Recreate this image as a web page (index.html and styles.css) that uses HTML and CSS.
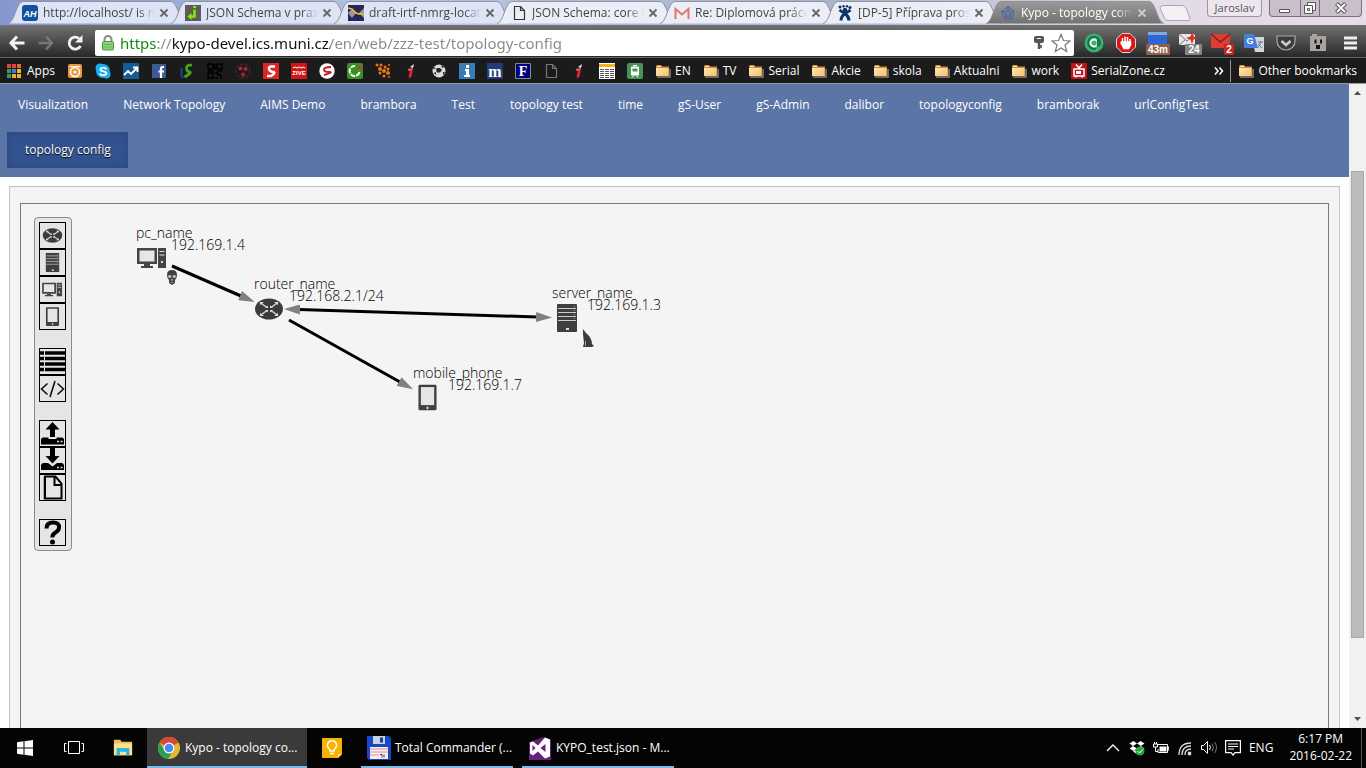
FILE: index.html
```html
<!DOCTYPE html>
<html lang="en">
<head>
<meta charset="utf-8">
<title>Kypo - topology config</title>
<link rel="stylesheet" href="styles.css">
</head>
<body>
<svg class="defs" aria-hidden="true">
  <defs>
    <linearGradient id="folderFill" x1="0" y1="0" x2="1" y2="1"><stop offset="0" stop-color="#ffe7b5"/><stop offset="1" stop-color="#f5bf6a"/></linearGradient>
    <linearGradient id="activeFill" x1="0" y1="0" x2="0" y2="1"><stop offset="0" stop-color="#9a9a9a"/><stop offset="1" stop-color="#727272"/></linearGradient>
    <symbol id="tab" viewBox="0 0 179 26" preserveAspectRatio="none"><path d="M0 24.5C7 23 8 2 15 1.5H163C170 2 171 23 178 24.5" stroke="#8d8f9a"/></symbol>
    <symbol id="close" viewBox="0 0 10 10"><path d="M1.5 1.5l7 7M8.500 1.500l-7 7" stroke="currentColor" stroke-width="1.800"/></symbol>
    <symbol id="folder" viewBox="0 0 16 16"><path d="M1 3.500Q1 2 2 2H6L7.500 3.500H14V13H1Z" fill="#c98a3a"/><path d="M2 14H15V6" stroke="#8a8377" stroke-width="1.500" fill="none"/><path d="M1 5H13.500V13H1Z" fill="url(#folderFill)"/><path d="M2 3.500H6" stroke="#ffe9c0"/></symbol>
    <symbol id="page" viewBox="0 0 16 16"><path d="M3.500 1.500h6l4 4v9h-10zM9.500 1.500v4h4" fill="none" stroke="currentColor" stroke-width="1.200"/></symbol>
    <symbol id="redi" viewBox="0 0 16 16"><path d="M7 6l3-1-1.500 9-3 1z" fill="#d8263c"/><path d="M7 4l4-3-1 4z" fill="#e4e4ee"/><path d="M5 7l4-1" stroke="#ec5262" stroke-width="2"/></symbol>
    <symbol id="router" viewBox="0 0 30 22"><ellipse cx="15" cy="11" rx="14" ry="10.500" fill="#3b3b3b"/><path d="M6 4.500l7 5M24 4.500l-7 5M6 17.500l7-5M24 17.500l-7-5" stroke="#d6d6d6" stroke-width="1.500"/><path d="M6 7V4h4zM20 4h4v3zM6 15v3h4zM20 18h4v-3z" fill="#ddd"/><path d="M11 10h3V7.500zM16 7.500V10h3zM11 12h3v2.500zM16 14.500V12h3z" fill="#ddd"/></symbol>
    <symbol id="server" viewBox="0 0 20 28"><rect width="20" height="28" rx="1" fill="#3e3e3e"/><path d="M1 4.500h18M1 8.500h18M1 12.500h18M1 16.500h18" stroke="#ccc"/><path d="M16.500 2.500h1.500M16.500 6.500h1.500M16.500 10.500h1.500M16.500 14.500h1.500" stroke="#888"/><rect x="9" y="24" width="3" height="2" fill="#ddd"/></symbol>
    <symbol id="pc" viewBox="0 0 29 20"><path d="M0 0H20V16H0Z" fill="#444"/><path d="M2.500 2.500h15v11h-15z" fill="#e6e6e6"/><path d="M7 16h6v2h3v2H4v-2h3z" fill="#444"/><path d="M21 0h8v20h-8z" fill="#444"/><path d="M22.500 3.500h5M22.500 7h5" stroke="#ddd"/><path d="M24 13h2v2h-2z" fill="#ddd"/></symbol>
    <symbol id="phone" viewBox="0 0 20 28"><rect x=".5" y=".5" width="19" height="27" rx="1.500" fill="#404040"/><path d="M3 3h14v19H3z" fill="#e5e5e5"/><path d="M10 23.500v3M8.500 25h3" stroke="#ddd"/></symbol>
    <marker id="head" viewBox="0 0 16 10" refX="1" refY="5" markerWidth="16" markerHeight="10" markerUnits="userSpaceOnUse" orient="auto-start-reverse"><path d="M0 0L16 5L0 10Z" fill="#808080" stroke="none"/></marker>
  </defs>
</svg>

<header class="browser">
  <div class="tabstrip">
    <div class="tab"><svg class="tab-shape"><use href="#tab"/></svg>
      <svg class="ico" viewBox="0 0 16 16"><rect width="16" height="16" rx="3" fill="#15509c"/><text x="8" y="12" text-anchor="middle" class="g-ah">AH</text></svg>
      <span class="tab-title">http://localhost/ is not</span><button class="tab-close" aria-label="Close"><svg><use href="#close"/></svg></button></div>
    <div class="tab"><svg class="tab-shape"><use href="#tab"/></svg>
      <svg class="ico" viewBox="0 0 16 16"><path fill="#5f5a59" d="M0 0h16v16H0z"/><path d="M9.500 4.500v7h-5" stroke="#7cf000" stroke-width="2.500" fill="none"/><path d="M6.500 8v7L2.500 11.500zM8 1h3v2H8z" fill="#7cf000"/></svg>
      <span class="tab-title">JSON Schema v praxi</span><button class="tab-close" aria-label="Close"><svg><use href="#close"/></svg></button></div>
    <div class="tab"><svg class="tab-shape"><use href="#tab"/></svg>
      <svg class="ico" viewBox="0 0 16 16"><path fill="#26265c" d="M0 0h16v16H0z"/><path d="M4 4l4 4-4 5-4-5zM11 8l5-5v10z" fill="#999"/><path d="M0 3l4 1 4 4 3 1h5" stroke="#f0c020" stroke-width="1.500" fill="none"/></svg>
      <span class="tab-title">draft-irtf-nmrg-location</span><button class="tab-close" aria-label="Close"><svg><use href="#close"/></svg></button></div>
    <div class="tab"><svg class="tab-shape"><use href="#tab"/></svg>
      <svg class="ico dark"><use href="#page"/></svg>
      <span class="tab-title">JSON Schema: core defi</span><button class="tab-close" aria-label="Close"><svg><use href="#close"/></svg></button></div>
    <div class="tab"><svg class="tab-shape"><use href="#tab"/></svg>
      <svg class="ico" viewBox="0 0 16 16"><path fill="#f1eeee" d="M1 3h14v11H1z"/><path d="M1.500 14V4L8 9.500 14.500 4v10" stroke="#dd7770" stroke-width="2" fill="none"/></svg>
      <span class="tab-title">Re: Diplomová práce -</span><button class="tab-close" aria-label="Close"><svg><use href="#close"/></svg></button></div>
    <div class="tab"><svg class="tab-shape"><use href="#tab"/></svg>
      <svg class="ico" viewBox="0 0 16 16"><g fill="#0b3468"><circle cx="8" cy="5" r="2.200"/><circle cx="3" cy="2" r="1.500"/><circle cx="6.500" cy="1.200" r="1.200"/><circle cx="10" cy="1.200" r="1.200"/><circle cx="13" cy="2.500" r="1.500"/></g><path d="M2.500 5q5.500 5 11 0M4 15.500q0-4 4-7 4 3 4 7" stroke="#0b3468" stroke-width="3" fill="none"/></svg>
      <span class="tab-title">[DP-5] Příprava prostře</span><button class="tab-close" aria-label="Close"><svg><use href="#close"/></svg></button></div>
    <div class="tab active"><svg class="tab-shape"><use href="#tab"/></svg>
      <svg class="ico" viewBox="0 0 16 16" fill="none" stroke="#4a68a8"><path d="M8 1.500L14 6l-2 8H5L1.500 6.500zM8 1.500L5 14M14 6L1.500 6.500 12 14M8 1.500l4 12.500M5 14l9-8"/></svg>
      <span class="tab-title">Kypo - topology config</span><button class="tab-close" aria-label="Close"><svg><use href="#close"/></svg></button></div>
    <button class="newtab" aria-label="New tab"><svg viewBox="0 0 32 16"><path d="M5 .5H23Q26 .5 27 3L31 13Q31.500 15.500 29 15.500H9Q6.500 15.500 5.500 13L1 3Q1 .5 5 .5Z" fill="#f4f1f6" stroke="#aaa6ad"/></svg></button>
    <div class="window-ctl">
      <button class="profile">Jaroslav</button>
      <div class="winbtns">
        <button aria-label="Minimize"><svg viewBox="0 0 14 14"><path d="M1.500 8.500h10v3h-10z" fill="#fff" stroke="#555"/></svg></button>
        <button aria-label="Restore"><svg viewBox="0 0 14 14" fill="#fff" stroke="#555"><path d="M4.500 1.500h8v8h-8z"/><path d="M1.500 4.500h8v8h-8zM4.500 7.500h2v2h-2z"/></svg></button>
        <button aria-label="Close window"><svg viewBox="0 0 14 14"><path d="M2.500 2.500l9 9M11.500 2.500l-9 9" stroke="#555" stroke-width="4"/><path d="M3 3l8 8M11 3l-8 8" stroke="#fff" stroke-width="2"/></svg></button>
      </div>
    </div>
  </div>

  <div class="toolbar">
    <button aria-label="Back"><svg viewBox="0 0 18 18"><path d="M9 2.500L3 9l6 6.500M3 9h13.500" stroke="#f2f2f2" stroke-width="3" fill="none"/></svg></button>
    <button aria-label="Forward"><svg viewBox="0 0 18 18"><path d="M9 2.500L15 9l-6 6.500M15 9H1.500" stroke="#777" stroke-width="2.500" fill="none"/></svg></button>
    <button aria-label="Reload"><svg viewBox="0 0 18 18"><path d="M14.500 12A6 6 0 1 1 13 4.500" stroke="#f2f2f2" stroke-width="2.800" fill="none"/><path d="M16.500 1v7.500H9z" fill="#f2f2f2"/></svg></button>
    <div class="omnibox">
      <svg class="lock" viewBox="0 0 14 16"><path d="M3.500 8V4.500a3.500 3.500 0 0 1 7 0V8" fill="none" stroke="#8b8b8b" stroke-width="2"/><rect x="1.500" y="6.500" width="11" height="8.500" rx="1" fill="#8bd07b" stroke="#4d9a40"/><path d="M2.500 9.500h9M2.500 12h9" stroke="#64b554"/></svg>
      <input class="url" aria-label="Address" value="https://kypo-devel.ics.muni.cz/en/web/zzz-test/topology-config">
      <svg class="key" viewBox="0 0 12 16"><rect x="1" y="1" width="10" height="7" rx="2" fill="#555"/><path d="M4 3.500h4" stroke="#fff"/><path d="M6 8v6M6 11.500h3" stroke="#555" stroke-width="2.500"/></svg>
      <svg class="star" viewBox="0 0 20 20"><path d="M10 1.500l2.500 6 6.500.5-5 4 1.700 6.500L10 15l-5.700 3.500L6 12 1 8l6.500-.5z" fill="#fff" stroke="#777" stroke-width="1.200"/></svg>
    </div>
    <div class="extensions">
      <svg viewBox="-2 -2 24 24"><circle cx="10" cy="10" r="9.500" fill="#39b073"/><circle cx="10" cy="10" r="3.500" fill="none" stroke="#e8fff4" stroke-width="1.800"/><path d="M13.800 6.500v6q2.500.5 2.200-3.500A6 6 0 1 0 12 15.500" fill="none" stroke="#1d6e45" stroke-width="1.800"/></svg>
      <svg viewBox="-2 -2 24 24"><path d="M6 .5h8L19.500 6v8L14 19.500H6L.5 14V6z" fill="#e01414" stroke="#ddd"/><path d="M6.500 11V5M9 10V3.500M11.500 10V4M14 11V6M5 10l3 5.500h4.500l2-3.500V9H5.500z" stroke="#fff" stroke-width="1.500" fill="#fff"/></svg>
      <svg viewBox="0 0 24 24"><path d="M2 2h19v12H2z" fill="#2d67d4"/><path d="M2 1h19v3H2z" fill="#89a7dd"/><rect y="13" width="24" height="11" rx="1" fill="#91604d"/><text x="12" y="22" text-anchor="middle" class="g-badge">43m</text></svg>
      <svg viewBox="0 0 24 24"><path d="M1 3h16v11H1z" fill="#e7e7e7"/><path d="M1 3l8 7 8-7M1 14l6-5" stroke="#777" fill="none"/><path d="M14 1l1.500 4.500L20 7l-4.500 1.500L14 13l-1.500-4.500L8 7l4.500-1.500z" fill="#e62620"/><rect x="7" y="13" width="17" height="11" rx="1" fill="#858585"/><text x="16" y="22" text-anchor="middle" class="g-badge">24</text></svg>
      <svg viewBox="0 0 24 24"><path d="M1 3h19v14H1z" fill="#de3d34"/><path d="M1 3l9.500 8L20 3" stroke="#831c19" stroke-width="1.500" fill="none"/><rect x="14" y="13" width="10" height="11" rx="1" fill="#c62720"/><text x="19" y="22" text-anchor="middle" class="g-badge">2</text></svg>
      <svg viewBox="-2 -2 24 24"><path d="M8 4h12v15H11z" fill="#d5d5d5"/><path d="M0 1h10l4 14H0z" fill="#467ee0"/><path d="M14 9h5M16.500 8q0 5-3 7M14 11l4 4" stroke="#587aa5" fill="none"/><text x="6" y="11" text-anchor="middle" class="g-g">G</text></svg>
      <svg viewBox="-2 -2 24 24"><path d="M1 3h18v5a9 9 0 0 1-18 0z" fill="#3c3c3c" stroke="#aaa" stroke-width="1.200"/><path d="M5.500 8l4.500 4 4.500-4" stroke="#ccc" stroke-width="2.500" fill="none"/></svg>
      <svg viewBox="-2 -2 24 24"><path d="M2 3h2V1h5v2h9v15H2z" fill="#aaa39d"/><path d="M7.500 6.500v4M13 6.500v4" stroke="#151515" stroke-width="2"/><path d="M8 12h4v4H8z" fill="#151515"/></svg>
      <button aria-label="Menu"><svg viewBox="-2 -2 24 24"><path d="M4 5h13M4 10h13M4 15h13" stroke="#eee" stroke-width="3"/></svg></button>
    </div>
  </div>

  <nav class="bookmarks" aria-label="Bookmarks">
    <a href="#"><svg class="ico" viewBox="0 0 16 16"><path d="M0 1h4v4H0zM5 1h4v4H5z" fill="#e4473a"/><path d="M10 1h4v4h-4z" fill="#e46a3a"/><path d="M0 6h4v4H0z" fill="#2ca160"/><path d="M5 6h4v4H5z" fill="#3a7ee0"/><path d="M10 6h4v4h-4z" fill="#efbd2a"/><path d="M0 11h4v4H0z" fill="#2ca160"/><path d="M5 11h4v4H5zM10 11h4v4h-4z" fill="#efb02a"/></svg>Apps</a>
    <a href="#" aria-label="Clock"><svg class="ico" viewBox="0 0 16 16"><rect x="1" y="1" width="14" height="14" rx="2" fill="#e9983d"/><circle cx="8" cy="9" r="4.500" fill="none" stroke="#fff" stroke-width="1.500"/><circle cx="8" cy="9" r="1.500" fill="#fff"/><path d="M3 3.500h10" stroke="#fff"/></svg></a>
    <a href="#" aria-label="Skype"><svg class="ico" viewBox="0 0 16 16"><circle cx="8" cy="8" r="7" fill="#1aaef0"/><circle cx="5" cy="5" r="4.500" fill="#1aaef0"/><circle cx="11.500" cy="11.500" r="4" fill="#1aaef0"/><text x="8" y="12.500" text-anchor="middle" class="g-s">S</text></svg></a>
    <a href="#" aria-label="Chart"><svg class="ico" viewBox="0 0 16 16"><path fill="#155c93" d="M0 0h16v16H0z"/><path d="M1 12l4-4 3 3 6-6M10 4.500h4.500V9" stroke="#fff" stroke-width="1.800" fill="none"/></svg></a>
    <a href="#" aria-label="Facebook"><svg class="ico" viewBox="0 0 16 16"><path fill="#3c5a98" d="M1 1h14v14H1z"/><path d="M13 4h-1.500Q10 4 10 6v9M7.500 8.500H13" stroke="#fff" stroke-width="2.200" fill="none"/></svg></a>
    <a href="#" aria-label="IS"><svg class="ico" viewBox="0 0 16 16"><path d="M2.500 5v7q0 2 2 2.500" stroke="#243f8c" stroke-width="2" fill="none"/><path d="M13 2.200Q7.500 1.500 7.500 5t3 4-5 5" stroke="#45a414" stroke-width="2.800" fill="none"/></svg></a>
    <a href="#" aria-label="QR"><svg class="ico" viewBox="0 0 16 16" fill="none" stroke="#000" stroke-width="1.500"><path d="M1 1h5v5H1zM10 1h5v5h-5zM1 10h5v5H1zM8 1v6M1 8h6M10 8h5M8 10h3v2h4M8 15h3M14 13v3"/></svg></a>
    <a href="#" aria-label="Ball"><svg class="ico" viewBox="0 0 16 16"><circle cx="8" cy="8" r="7" fill="none" stroke="#7b2228" stroke-dasharray="3 2"/><g fill="#a32a32"><circle cx="5.500" cy="5.500" r="2"/><circle cx="10.500" cy="6" r="2"/><circle cx="8" cy="11.500" r="2"/></g></svg></a>
    <a href="#" aria-label="S red"><svg class="ico" viewBox="0 0 16 16"><path fill="#e02426" d="M0 0h16v16H0z"/><path d="M12 3.500H8.500Q5.500 3.500 6 6t4 3-2 4H4" stroke="#fff" stroke-width="2.500" fill="none"/></svg></a>
    <a href="#" aria-label="Zive"><svg class="ico" viewBox="0 0 16 16"><path fill="#cf1717" d="M0 0h16v16H0z"/><path d="M2 5l2-1 2 1 2-1 2 1 2-1 2 1" stroke="#fff" fill="none"/><text x="8" y="12" text-anchor="middle" class="g-zive">ZIVE</text></svg></a>
    <a href="#" aria-label="Seznam"><svg class="ico" viewBox="0 0 16 16"><circle cx="8" cy="8" r="7.700" fill="#fff"/><path d="M12 4Q5 4 5 6.500T10 9t-5 3" stroke="#c91818" stroke-width="2" fill="none"/></svg></a>
    <a href="#" aria-label="Cycle"><svg class="ico" viewBox="0 0 16 16"><rect width="16" height="16" rx="2" fill="#359324"/><path d="M12.500 9A5 5 0 1 1 8 3" stroke="#fff" stroke-width="2" fill="none" stroke-dasharray="5 1"/><path d="M10 6l3-4 3 4z" fill="#e02828"/></svg></a>
    <a href="#" aria-label="Dots"><svg class="ico" viewBox="0 0 16 16" fill="#e67814"><circle cx="2" cy="2" r="1.500"/><circle cx="6" cy="2" r="1.500"/><circle cx="10" cy="4" r="1.500"/><circle cx="5" cy="6" r="2"/><circle cx="9" cy="8" r="2"/><circle cx="13" cy="6" r="1.500"/><circle cx="5" cy="10" r="1.500"/><circle cx="9" cy="13" r="1.500"/><circle cx="13" cy="10" r="2"/><circle cx="14" cy="2" r="1"/><circle cx="14" cy="14" r="1"/></svg></a>
    <a href="#" aria-label="i"><svg class="ico"><use href="#redi"/></svg></a>
    <a href="#" aria-label="Football"><svg class="ico" viewBox="0 0 16 16"><circle cx="8" cy="8" r="6.500" fill="#ddd"/><path d="M6 5h3l2 2-2 2.500H6L5 7zM2 6l2-2 .5 2zM10 2l3 2-2 1zM2.500 10l2-1 1 3zM12 9l2 0-2 3.500z" fill="#222"/></svg></a>
    <a href="#" aria-label="Info"><svg class="ico" viewBox="0 0 16 16"><path fill="#3a7cb6" d="M0 0h16v16H0z"/><path d="M7 2h3v3H7zM6 6h4v6h1v2H5v-2h2V8H6z" fill="#fff"/></svg></a>
    <a href="#" aria-label="m"><svg class="ico" viewBox="0 0 16 16"><path fill="#213d79" d="M0 0h16v16H0z"/><text x="8" y="14" text-anchor="middle" class="g-m">m</text></svg></a>
    <a href="#" aria-label="F"><svg class="ico" viewBox="0 0 16 16"><path fill="#000080" stroke="#888" d="M.5.5h15v15H.5z"/><text x="8" y="13" text-anchor="middle" class="g-f">F</text></svg></a>
    <a href="#" aria-label="Page" class="dim"><svg class="ico"><use href="#page"/></svg></a>
    <a href="#" aria-label="i"><svg class="ico"><use href="#redi"/></svg></a>
    <a href="#" aria-label="Timetable"><svg class="ico" viewBox="0 0 16 16"><path fill="#fff" d="M0 0h16v16H0z"/><path d="M0 1h16v3H0z" fill="#efb518"/><path d="M1 6.500h4M6 6.500h4M11 6.500h4M1 8.500h4M6 8.500h4M11 8.500h4M1 10.500h4M6 10.500h4M11 10.500h4M1 12.500h4M6 12.500h4M11 12.500h4M1 14.500h4M6 14.500h4M11 14.500h4" stroke="#555"/></svg></a>
    <a href="#" aria-label="Train"><svg class="ico" viewBox="0 0 16 16"><rect width="16" height="16" rx="2" fill="#4a9356"/><path d="M4.500 4h7v8h-7zM6 2.500h4M5 14.500l1.500-2M11 14.500l-1.500-2" fill="#fff" stroke="#fff"/><path d="M5.500 5.500h5v3h-5z" fill="#4a9356"/></svg></a>
    <a href="#"><svg class="ico"><use href="#folder"/></svg>EN</a>
    <a href="#"><svg class="ico"><use href="#folder"/></svg>TV</a>
    <a href="#"><svg class="ico"><use href="#folder"/></svg>Serial</a>
    <a href="#"><svg class="ico"><use href="#folder"/></svg>Akcie</a>
    <a href="#"><svg class="ico"><use href="#folder"/></svg>skola</a>
    <a href="#"><svg class="ico"><use href="#folder"/></svg>Aktualni</a>
    <a href="#"><svg class="ico"><use href="#folder"/></svg>work</a>
    <a href="#"><svg class="ico" viewBox="0 0 16 16"><path fill="#c51217" d="M0 0h16v16H0z"/><path d="M5 1.500L8 5l3-3.500M3 6h10v7H3zM5 14.500V13M11 14.500V13" stroke="#fff" stroke-width="1.500" fill="none"/><path d="M5 8h5v3H5z" fill="#fff"/></svg>SerialZone.cz</a>
    <div class="bookmarks-end">
      <button class="more" aria-label="More bookmarks"><svg viewBox="0 0 10 10"><path d="M1 1.500L4 5 1 8.500M5.500 1.500l3 3.500-3 3.500" stroke="#fff" stroke-width="1.600" fill="none"/></svg></button>
      <a href="#"><svg class="ico"><use href="#folder"/></svg>Other bookmarks</a>
    </div>
  </nav>
</header>

<div class="viewport">
  <div class="page">
    <nav class="site-nav">
      <a href="#">Visualization</a><a href="#">Network Topology</a><a href="#">AIMS Demo</a><a href="#">brambora</a><a href="#">Test</a><a href="#">topology test</a><a href="#">time</a><a href="#">gS-User</a><a href="#">gS-Admin</a><a href="#">dalibor</a><a href="#">topologyconfig</a><a href="#">bramborak</a><a href="#">urlConfigTest</a><a href="#" class="current">topology config</a>
    </nav>
    <main class="portlet">
      <div class="canvas">
        <svg class="diagram">
          <g transform="translate(-21 -204)">
            <g stroke="#000" stroke-width="3">
              <path d="M172 266L241 296" marker-end="url(#head)"/>
              <path d="M299 309.500L537 317" marker-start="url(#head)" marker-end="url(#head)"/>
              <path d="M289 320L400 382" marker-end="url(#head)"/>
            </g>
            <use href="#pc" x="137" y="248" width="29" height="20"/>
            <use href="#router" x="254" y="298" width="30" height="22"/>
            <use href="#server" x="557" y="304" width="20" height="28"/>
            <use href="#phone" x="418" y="384" width="19" height="27"/>
            <path d="M167 275q0-5 5-5t5 5q0 3-2 5v3l-3 2-3-2v-3q-2-2-2-5z" fill="#404040"/>
            <path d="M168.500 275.500h2.500v2h-2.500zM173 275.500h2.500v2H173zM171.500 279h1v1.500h-1zM170 282.500h4" fill="#ddd" stroke="#aaa" stroke-width=".5"/>
            <path d="M583 329l3 4q6 5 6 11l2 2-2 1h-9l1-4-1-9z" fill="#3c3c3c"/>
            <path d="M585.500 341v5" stroke="#bbb" stroke-width=".8"/>
            <g class="node-label">
              <text x="136" y="238">pc_name</text><text x="171" y="250">192.169.1.4</text>
              <text x="254" y="289">router_name</text><text x="289" y="301">192.168.2.1/24</text>
              <text x="552" y="298">server_name</text><text x="587" y="310">192.169.1.3</text>
              <text x="413" y="378">mobile_phone</text><text x="448" y="390">192.169.1.7</text>
            </g>
          </g>
        </svg>
        <div class="tools">
          <div class="tool-group">
            <button aria-label="Router"><svg viewBox="-3 -5 36 32"><use href="#router" width="30" height="22"/></svg></button>
            <button aria-label="Server"><svg viewBox="-8 -4 36 36"><use href="#server" width="20" height="28"/></svg></button>
            <button aria-label="Computer"><svg viewBox="-3 -8 36 36"><use href="#pc" width="29" height="20"/></svg></button>
            <button aria-label="Mobile"><svg viewBox="-8 -4 36 36"><use href="#phone" width="20" height="28"/></svg></button>
          </div>
          <div class="tool-group">
            <button aria-label="List"><svg viewBox="0 0 25 25"><path d="M0 4h25M0 9.500h25M0 15h25M0 20.500h25" stroke="#000" stroke-width="3.500"/><path d="M4.500 2v21" stroke="#ddd"/></svg></button>
            <button aria-label="Code"><svg viewBox="0 0 25 25"><path d="M7.500 7.500l-6 5.500 6 5.500M17.500 7.500l6 5.500-6 5.500M15 5l-5 16" stroke="#111" stroke-width="1.600" fill="none"/></svg></button>
          </div>
          <div class="tool-group">
            <button aria-label="Upload"><svg viewBox="0 0 25 25"><path d="M12.500 1l7 7.500H15V16h-5V8.500H5.500z"/><path d="M1 18.500Q1 17 3 16.500h5.500V18h8v-1.500H22q2 .5 2 2v5H1z"/><path d="M17 20.500h2M20.500 20.500h2" stroke="#ddd" stroke-width="1.500"/></svg></button>
            <button aria-label="Download"><svg viewBox="0 0 25 25"><path d="M10 0h5v8h4.500l-7 7.500-7-7.500H10z"/><path d="M1 17.500Q1 15.500 3 15h5l4.500 3.500L17 15h5q2 .5 2 2.500v4.500H1z"/><path d="M17 19.500h2M20.500 19.500h2" stroke="#ddd" stroke-width="1.500"/></svg></button>
            <button aria-label="New file"><svg viewBox="0 0 25 25"><path d="M3.500 24V2" stroke="#aaa"/><path d="M5 1.500h10.500l6 7V23.500H5zM14.500 1.500V10h7" stroke="#000" stroke-width="2" fill="none"/></svg></button>
          </div>
          <div class="tool-group">
            <button aria-label="Help"><svg viewBox="0 0 25 25"><path d="M6.500 8.500Q6.500 2.500 13 2.500t6 5q0 3-3.500 5T12.500 17.500" stroke="#000" stroke-width="4" fill="none"/><circle cx="12.500" cy="22" r="2.500"/></svg></button>
          </div>
        </div>
      </div>
    </main>
  </div>
  <div class="scrollbar" aria-hidden="true">
    <svg viewBox="0 0 17 17"><path d="M5 11h7L8.500 7z" fill="#505050"/></svg>
    <div class="track"><div class="thumb"></div></div>
    <svg viewBox="0 0 17 17"><path d="M5 6h7l-3.500 4z" fill="#505050"/></svg>
  </div>
</div>

<footer class="taskbar">
  <button class="task-icon" aria-label="Start"><svg viewBox="0 0 16 16"><path d="M0 2.200L6.500 1.300V7.500H0zM7.500 1.200L16 0v7.500H7.500zM0 8.500h6.500v6.200L0 13.800zM7.500 8.500H16V16l-8.500-1.200z" fill="#fff"/></svg></button>
  <button class="task-icon" aria-label="Task view"><svg class="wide" viewBox="0 0 20 16" fill="none" stroke="#fff"><path d="M4.500 1.500h11v12h-11zM2.500 3.500h-2v8h2M17.500 3.500h2v8h-2"/></svg></button>
  <button class="task-icon" aria-label="File Explorer"><svg class="wide" viewBox="0 0 22 20"><path d="M1 1h7l1.500 2H21v15H1z" fill="#e8bf5a"/><path d="M1 5h20v13H1z" fill="#ffe08a"/><path d="M4 18v-8h14v8h-3.500v-4h-7v4z" fill="#29b4ea"/></svg></button>
  <button class="task open current-task"><svg viewBox="0 0 24 24"><circle cx="12" cy="12" r="11" fill="#e0b92c"/><path d="M12 12L2.500 6.500A11 11 0 0 1 21.500 6.500z" fill="#da4535"/><path d="M2.500 6.500A11 11 0 0 0 11 23l5.500-9H7.500z" fill="#2a9d57"/><path d="M12 6.500h9.500L12 7z" stroke="#da4535" fill="none"/><circle cx="12" cy="12" r="5.500" fill="#fff"/><circle cx="12" cy="12" r="4.300" fill="#4a8af4"/></svg>Kypo - topology co...</button>
  <button class="task-icon keep" aria-label="Keep"><svg class="wide" viewBox="0 0 20 20"><path d="M0 0h20v16l-4 4H0z" fill="#f4b400"/><path d="M16 20v-4h4z" fill="#ffd766"/><path d="M8 13q0-2-1.500-3a4.500 4.500 0 1 1 7 0Q12 11 12 13zM8 15.500h4" fill="none" stroke="#fff" stroke-width="1.500"/></svg></button>
  <button class="task open"><svg viewBox="0 0 24 24"><path d="M0 0h22l2 2v22H2l-2-2z" fill="#1748c5"/><path d="M6 0h12v8H6z" fill="#c9d2e4"/><path d="M13 1.500h3v5h-3z" fill="#23407c"/><path d="M3 11h18v12H3z" fill="#f4eeee"/><path d="M3 13h18M3 16h18M3 19h9" stroke="#e68e94"/><path d="M13 18.500h2v3M17 18.500v3" stroke="#444" fill="none"/></svg>Total Commander (...</button>
  <button class="task open"><svg viewBox="0 0 24 24"><path d="M1 6l15-5 7 3v20H1z" fill="#68217a"/><path d="M17 1.500l5 2v17l-5 2-7-7-5 4-3-2v-11l3-1 5 4z" fill="#fff"/><path d="M4.500 9v6l3-3zM12.500 12l5-4v8z" fill="#68217a"/></svg>KYPO_test.json - M...</button>
  <div class="tray">
    <svg viewBox="0 0 16 16"><path d="M2 11l6-6 6 6" stroke="#fff" stroke-width="1.300" fill="none"/></svg>
    <svg viewBox="0 0 16 16"><path d="M4.500 1L8 3.500l-4 2.500L.5 3.500zM11.500 1L15.500 3.500 12 6 8 3.500zM4 6l4 2.500L4.500 11 .5 8.500zM12 6l3.500 2.500L12 11 8 8.500zM8 9.500l3 2-3 2.500-4-2.500z" fill="#fff"/><circle cx="11" cy="11" r="4.500" fill="#28a745"/><path d="M8.500 11l2 2 3-3.500" stroke="#fff" fill="none"/></svg>
    <svg viewBox="0 0 16 16"><path d="M6.500 6.500h7v5h-7z" fill="#fff"/><path d="M5 4.500h9.500v8H5V9M15 7h1v3h-1zM2.500 7v4.500H5M.5 4v3h4V4zM1.500 4V2M3.500 4V2" stroke="#fff" fill="none"/></svg>
    <svg viewBox="0 0 16 16" fill="none" stroke="#ddd" stroke-width="1.300"><path d="M2 15Q2 3 14 3M5 15Q5 6 14 6M8 15Q8 9 14 9"/><path d="M11.500 12.500h2v2h-2z" fill="#fff"/></svg>
    <svg viewBox="0 0 16 16" fill="none" stroke="#fff"><path d="M.5 5.500h2l4-4v12l-4-4h-2z"/><path d="M8.500 5q2 2.500 0 5"/><path d="M11 3.500q3 4 0 8M13.500 2q4 5.500 0 11" stroke="#777"/></svg>
    <svg viewBox="0 0 16 16" fill="none" stroke="#fff" stroke-width="1.200"><path d="M.6.6h14.800v12H10L8 15l-2-2.400H.6zM3 4h10M3 6.500h10M3 9h6"/></svg>
    <span class="lang">ENG</span>
    <time class="clock" datetime="2016-02-22T18:17">6:17 PM<br>2016-02-22</time>
  </div>
</footer>
</body>
</html>
```

FILE: styles.css
```css
* { box-sizing: border-box; }

body {
  margin: 0;
  height: 100vh;
  display: flex;
  flex-direction: column;
  overflow: hidden;
  background: #fff;
  color: #000;
  font: 12px/16px "Open Sans", "Noto Sans", sans-serif;
}

button {
  margin: 0;
  padding: 0;
  border: 0;
  background: none;
  color: inherit;
  font: inherit;
  display: flex;
  align-items: center;
  justify-content: center;
}

a { color: inherit; text-decoration: none; }
svg { display: block; flex: none; }

.defs { position: absolute; width: 0; height: 0; }
.ico { width: 16px; height: 16px; }
.dark { color: #333; }

/* Letters used inside favicons and badges */
.g-ah { font: italic bold 9px "Liberation Sans", sans-serif; fill: #fff; }
.g-s { font: bold 13px "Liberation Sans", sans-serif; fill: #fff; }
.g-zive { font: bold 6px "Liberation Sans", sans-serif; fill: #fff; }
.g-m { font: bold 16px "Liberation Serif", serif; fill: #fff; }
.g-f { font: bold 14px "Liberation Serif", serif; fill: #fff; }
.g-g { font: bold 9px "Liberation Sans", sans-serif; fill: #fff; }
.g-badge { font: bold 10px "Liberation Sans", sans-serif; fill: #fff; }

/* Tab strip */
.browser { flex: none; border-bottom: 1px solid #999; }

.tabstrip {
  display: flex;
  height: 25px;
  padding-left: 8px;
  background: linear-gradient(90deg, #8796cf, #b9c6e2 30%, #a9b3cc 60%, #e3dae8 85%, #e8dce8);
}

.tab {
  position: relative;
  display: flex;
  align-items: center;
  flex: 0 1 163px;
  min-width: 0;
  padding: 1px 2px 0 14px;
  color: #444;
}

.tab-shape {
  position: absolute;
  left: 0;
  top: 0;
  width: calc(100% + 16px);
  height: 25px;
  fill: #dde4f5;
}

.tab > .ico, .tab-title, .tab-close { position: relative; }
.tab:nth-child(n+4) .tab-shape { fill: #eceef7; }
.tab.active .tab-shape { fill: url(#activeFill); }
.tab.active { color: #fff; }

.tab-title {
  flex: 1;
  min-width: 0;
  margin: 0 4px 0 5px;
  overflow: hidden;
  white-space: nowrap;
  mask-image: linear-gradient(90deg, #000 85%, transparent);
}

.tab-close svg { width: 10px; height: 10px; }
.tab-close { color: #666; }
.active .tab-close { color: #ccc; }

.newtab { margin: 0 auto 0 10px; }
.newtab svg { width: 32px; height: 16px; }

.window-ctl { display: flex; gap: 7px; padding-right: 4px; }

.profile {
  width: 55px;
  height: 17px;
  border: 1px solid #9c959f;
  border-top: 0;
  border-radius: 0 0 4px 4px;
  background: #eee6ee;
  font-size: 11px;
  color: #555;
}

.winbtns { display: flex; height: 17px; border: 1px solid #77717c; border-top: 0; border-radius: 0 0 4px 4px; background: #c8bfca; }
.winbtns button { width: 30px; }
.winbtns button:nth-child(2) { width: 20px; border: 1px solid #77717c; border-width: 0 1px; }
.winbtns button:last-child { width: 41px; }
.winbtns svg { width: 14px; height: 14px; }

/* Address bar row */
.toolbar {
  display: flex;
  align-items: center;
  height: 32px;
  padding: 3px 4px 0 8px;
  background: linear-gradient(#727272, #282828);
}

.toolbar > button { width: 18px; margin-right: 11px; }
.toolbar > button svg { width: 18px; height: 18px; }

.omnibox {
  display: flex;
  align-items: center;
  flex: 1;
  height: 26px;
  padding: 0 3px 0 6px;
  background: #fff;
  border-radius: 2px;
}

.lock { width: 14px; height: 18px; }

.url {
  flex: 1;
  min-width: 0;
  height: 24px;
  margin: 0;
  padding: 0 0 0 5px;
  border: 0;
  outline: 0;
  font: 15px/24px "Noto Sans", "Open Sans", sans-serif;
  color: transparent;
  background: linear-gradient(90deg, #0a8a0a 43px, #888 43px 58px, #111 58px 215px, #888 215px);
  background-clip: text;
}

.key { width: 12px; height: 16px; margin-right: 6px; }
.star { width: 20px; height: 20px; }

.extensions { display: flex; align-items: center; gap: 8px; margin-left: 8px; }
.extensions svg { width: 24px; height: 24px; }

/* Bookmarks bar */
.bookmarks {
  display: flex;
  align-items: center;
  gap: 12px;
  height: 26px;
  padding: 0 9px 0 7px;
  background: #1b1b1b;
  border-top: 1px solid #666;
  color: #fff;
  white-space: nowrap;
}

.bookmarks a { display: flex; align-items: center; gap: 4px; }
.bookmarks .dim { color: #777; }
.bookmarks-end { display: flex; margin-left: auto; }
.more { width: 24px; border-right: 1px solid #999; margin-right: 7px; height: 22px; }
.more svg { width: 10px; height: 10px; }

/* Web page */
.viewport { display: flex; flex: 1; min-height: 0; }
.page { display: flex; flex-direction: column; flex: 1; min-width: 0; overflow: hidden; }

.site-nav {
  display: flex;
  flex-wrap: wrap;
  gap: 9px 0;
  padding: 3px 100px 9px 0;
  background: #5b75a7;
  color: #fff;
}

.site-nav a { padding: 0 17px 0 18px; line-height: 36px; }

.site-nav .current {
  margin-left: 7px;
  background: #33528f;
  box-shadow: inset 0 0 10px #2c4880;
  text-shadow: 0 1px 1px #000;
}

.portlet {
  display: flex;
  flex: 1;
  min-height: 0;
  margin: 9px 9px 0;
  padding: 16px 10px 0;
  border: 1px solid #c3c3c3;
  border-bottom: 0;
  background: #f4f4f4;
}

.canvas {
  position: relative;
  flex: 1;
  padding: 13px;
  border: 1px solid #7b7b7b;
  border-bottom: 0;
}

.diagram { position: absolute; left: 0; top: 0; width: 100%; height: 100%; }
.node-label { font: 300 14px "Open Sans", "Noto Sans", sans-serif; }

.tools {
  position: relative;
  display: flex;
  flex-direction: column;
  gap: 18px;
  width: 38px;
  padding: 4px;
  border: 1px solid #8b8b8b;
  border-radius: 4px;
  background: #e5e5e5;
}

.tool-group button {
  width: 27px;
  height: 27px;
  border: 1px solid #000;
}

.tool-group svg { width: 25px; height: 25px; }

.scrollbar { display: flex; flex-direction: column; width: 17px; background: #f1f1f1; }
.scrollbar > svg { width: 17px; height: 17px; }
.track { flex: 1; padding: 70px 2px 73px; }
.thumb { height: 100%; background: #bcbcbc; border: 1px solid #a8a8a8; }

/* Task bar */
.taskbar {
  display: flex;
  flex: none;
  height: 40px;
  background: #040404;
  color: #fff;
}

.task-icon { width: 49px; }
.task-icon svg { width: 16px; height: 16px; }
.task-icon svg.wide { width: 20px; height: 20px; }
.keep { width: 50px; margin-right: 4px; }

.task {
  justify-content: flex-start;
  gap: 4px;
  width: 152px;
  margin-right: 9px;
  padding: 2px 0 0 6px;
  border-bottom: 2px solid #76b9ed;
  white-space: nowrap;
}

.task svg { width: 24px; height: 24px; }
.current-task { width: 160px; margin-right: 0; padding-left: 10px; background: #3a3a3a; }

.tray { display: flex; align-items: center; gap: 8px; margin-left: auto; padding-right: 4px; }
.tray svg { width: 16px; height: 16px; }
.clock {
  align-self: stretch;
  padding: 2px 9px 0 8px;
  border-right: 1px solid #555;
  line-height: 17px;
  text-align: center;
}
```
